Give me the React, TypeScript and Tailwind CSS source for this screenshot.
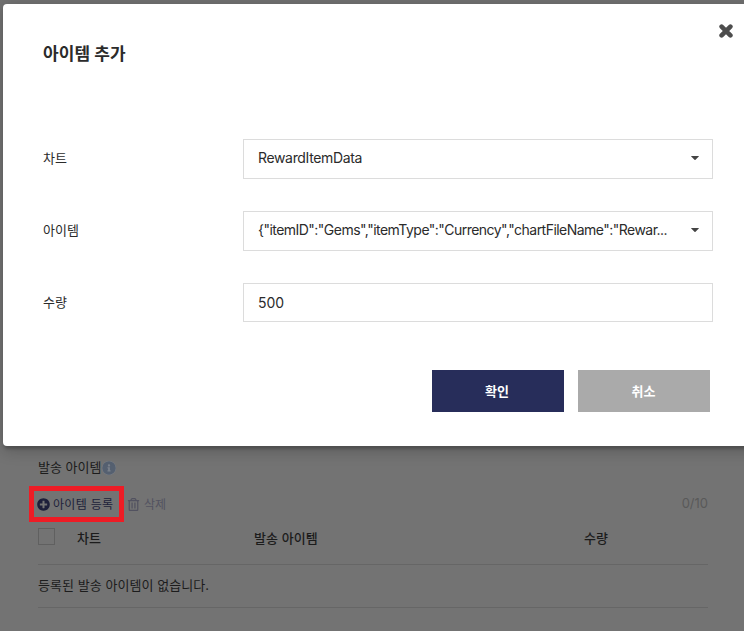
import { ReactNode, useState } from 'react';
import { FaInfoCircle, FaPlusCircle, FaRegTrashAlt } from 'react-icons/fa';

function CloseIcon() {
    return (
        <svg width="14" height="14" viewBox="0 0 14 14" className="fill-none stroke-current">
            <path d="M2.6 2.6l8.8 8.8M11.4 2.6l-8.8 8.8" strokeWidth="4.6" strokeLinecap="round" />
        </svg>
    );
}

function Caret() {
    return (
        <svg width="8" height="4" viewBox="0 0 8 4" className="mr-[3px] shrink-0 fill-[#444]">
            <path d="M.4 0h7.2a.3.3 0 0 1 .2.5L4.5 3.8a.7.7 0 0 1-1 0L.2.5A.3.3 0 0 1 .4 0z" />
        </svg>
    );
}

function Select({ children }: { children: ReactNode }) {
    return (
        <button className="flex h-10 w-[470px] items-center justify-between border border-[#dcdcdc] pr-[10px] pb-[2px] pl-[14px] text-left whitespace-nowrap">
            {children}
            <Caret />
        </button>
    );
}

function Field({ label, children }: { label: string; children: ReactNode }) {
    return (
        <div className="flex h-10 items-center">
            <label className="w-[200px] shrink-0 pb-[2px] text-[13px]">{label}</label>
            {children}
        </div>
    );
}

function AddItemModal() {
    const [count, setCount] = useState('500');

    return (
        <div className="absolute top-1 left-[3px] h-[442px] w-[760px] rounded bg-white pt-[38px] pl-10 text-sm text-[#2b2b2b] shadow-[1px_3px_3px_0_rgba(0,0,0,0.2),1px_3px_15px_2px_rgba(0,0,0,0.2)]">
            <button className="absolute top-[20px] left-[716px] text-[#4d4d4d]">
                <CloseIcon />
            </button>
            <h2 className="h-[97px] text-[17px] leading-6 font-bold tracking-[0.1px]">아이템 추가</h2>

            <div className="flex flex-col gap-8">
                <Field label="차트">
                    <Select>
                        <span className="tracking-[-0.35px]">RewardItemData</span>
                    </Select>
                </Field>
                <Field label="아이템">
                    <Select>
                        <span className="tracking-[-0.53px]">{'{"itemID":"Gems","itemType":"Currency","chartFileName":"Rewar...'}</span>
                    </Select>
                </Field>
                <Field label="수량">
                    <input
                        value={count}
                        onChange={(e) => setCount(e.target.value)}
                        className="mb-px h-[39px] w-[470px] border border-[#dcdcdc] px-[14px] tracking-[-0.1px] outline-none"
                    />
                </Field>
            </div>

            <div className="mt-[47px] ml-[389px] flex gap-[14px] text-[13px] font-bold text-white">
                <button className="h-[42px] w-[132px] bg-[#272d5a] pr-[2px]">확인</button>
                <button className="h-[42px] w-[132px] bg-[#aaaaaa] pr-px">취소</button>
            </div>
        </div>
    );
}

export default function App() {
    return (
        <div className="relative h-[631px] w-[744px] overflow-hidden bg-[#737373] font-['Inter','Noto_Sans_CJK_KR',sans-serif] text-[13px] text-[#1c1c1c]">
            {/* Dimmed page under the modal */}
            <div className="w-[708px] pt-[458px] pl-[38px]">
                <div className="flex h-5 items-center">
                    <span>발송 아이템</span>
                    <FaInfoCircle size={14} className="ml-px rounded-full bg-[#7b828c] text-[#556070]" />
                </div>

                <div className="mt-2 -ml-[9px] flex h-9 items-center text-xs">
                    <button className="flex h-9 w-[95px] items-center border-[5px] border-[#ee1c25] pl-[3px] text-[#1d1f3a]">
                        <FaPlusCircle size={13} className="mr-[3px]" />
                        <span className="pt-px tracking-[0.3px]">아이템 등록</span>
                    </button>
                    <button className="ml-[3px] flex items-center text-[#525260]">
                        <FaRegTrashAlt size={13} className="mr-1" />
                        <span className="pt-px">삭제</span>
                    </button>
                    <span className="ml-auto text-[13px] text-[#595959]">0/10</span>
                </div>

                <div className="flex h-[43px] border-b border-[#666] pt-[6px] font-medium">
                    <span className="mr-[22px] size-[17px] border border-[#606060]" />
                    <span className="w-[177px] pt-px">차트</span>
                    <span className="w-[330px] pt-px tracking-[0.1px]">발송 아이템</span>
                    <span className="pt-px">수량</span>
                </div>
                <div className="flex h-[43px] items-center border-b border-[#666] tracking-[0.05px]">등록된 발송 아이템이 없습니다.</div>
            </div>

            <AddItemModal />
        </div>
    );
}
